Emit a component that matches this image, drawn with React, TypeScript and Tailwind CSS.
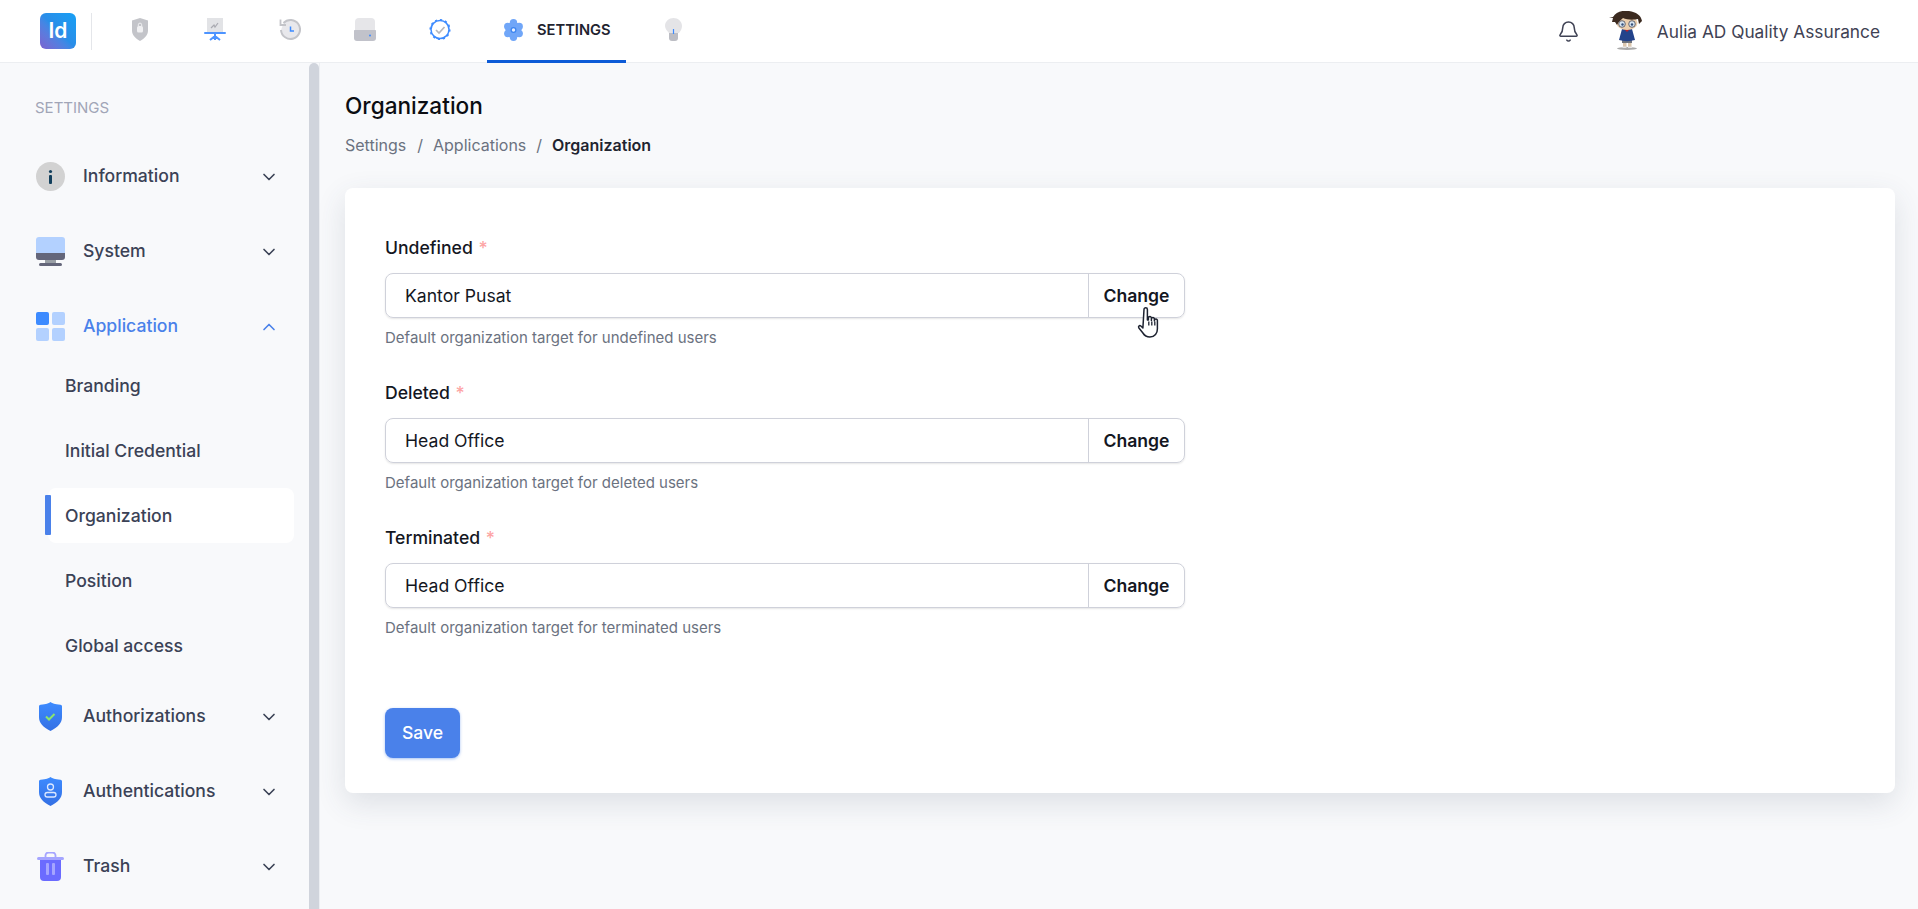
import { ChevronDown, ChevronUp, Bell } from "lucide-react";

const Font = "font-['Inter',sans-serif]";

function ShieldTabIcon() {
  return (
    <svg width="18" height="23" viewBox="0 0 18 23">
      <path d="M9 0l8 2.500v10c0 4.500-3.500 8-8 10.500-4.500-2.500-8-6-8-10.500v-10z" fill="#c3c4c9" />
      <rect x="6" y="8" width="6" height="6.500" rx="1.500" fill="#f0f0f2" />
      <path d="M7.300 8V6.800a1.700 1.700 0 013.400 0V8" fill="none" stroke="#f0f0f2" strokeWidth="1" />
    </svg>
  );
}

function PresentationIcon() {
  return (
    <svg width="22" height="23" viewBox="0 0 22 23">
      <rect x="3" y="0" width="16" height="14" fill="#e2e3e6" />
      <path d="M7 10l3-3 1 2 3-4" fill="none" stroke="#a9aab1" strokeWidth="1.200" />
      <rect x="0" y="14" width="22" height="2" rx="1" fill="#4d94ff" />
      <path d="M11 16v6M11 18l-5 4M11 18l5 4" stroke="#4d94ff" strokeWidth="2" fill="none" />
    </svg>
  );
}

function HistoryIcon() {
  return (
    <svg width="22" height="24" viewBox="0 0 22 24">
      <path d="M4.500 5a9.500 9.500 0 11-2.500 7" fill="#e8e8ec" stroke="#c3c4c9" strokeWidth="2" />
      <path d="M1.500 1.500V7H7" fill="none" stroke="#c3c4c9" strokeWidth="1.800" />
      <path d="M11.500 8.500v4.500h3.500" fill="none" stroke="#3d8bff" strokeWidth="1.500" />
    </svg>
  );
}

function DriveIcon() {
  return (
    <svg width="22" height="23" viewBox="0 0 22 23">
      <path d="M5 0h12a4 4 0 014 4v10H1V4a4 4 0 014-4z" fill="#e6e6e9" />
      <path d="M1 12h20c.6 0 1 .4 1 1v7a3 3 0 01-3 3H3a3 3 0 01-3-3v-7c0-.6.400-1 1-1z" fill="#c1c2ca" />
      <circle cx="16" cy="17.500" r="1" fill="#3d8bff" />
    </svg>
  );
}

function BadgeIcon() {
  return (
    <svg width="22" height="23" viewBox="0 0 22 23">
      <circle cx="11" cy="11.500" r="9" fill="none" stroke="#3d8bff" strokeWidth="1.500" />
      <circle cx="11" cy="11.500" r="9.800" fill="none" stroke="#3d8bff" strokeWidth="1.500" strokeDasharray="2.200 2.900" />
      <path d="M7 12l3 3 5.500-6" fill="none" stroke="#b5b6bc" strokeWidth="1.700" />
    </svg>
  );
}

function GearIcon() {
  const lobes = [0, 60, 120, 180, 240, 300];
  return (
    <svg width="21" height="22" viewBox="0 0 21 22">
      <circle cx="10.500" cy="11" r="8" fill="#70a6f8" />
      {lobes.map((a) => (
        <circle
          key={a}
          cx={10.5 + 6.6 * Math.sin((a * Math.PI) / 180)}
          cy={11 - 7.2 * Math.cos((a * Math.PI) / 180)}
          r="3.700"
          fill="#70a6f8"
        />
      ))}
      <circle cx="10.500" cy="11" r="3" fill="#3d85f0" />
      <circle cx="10.500" cy="11" r="1.700" fill="#e6efff" />
    </svg>
  );
}

function BulbIcon() {
  return (
    <svg width="17" height="23" viewBox="0 0 17 23">
      <path d="M8.500 0C13 0 17 3.500 17 8c0 3-1.500 5-3 7H4C2.500 13 0 11 0 8c0-4.500 4-8 8.500-8z" fill="#e4e4e7" />
      <path d="M4 15h9v5a3 3 0 01-3 3H7a3 3 0 01-3-3z" fill="#bcbdc4" />
      <path d="M8.500 11v5" stroke="#3d8bff" strokeWidth="1.200" />
    </svg>
  );
}

function Avatar() {
  return (
    <svg width="34" height="40" viewBox="0 0 34 40">
      <ellipse cx="18" cy="37.500" rx="10" ry="1.500" fill="#a9a9a9" />
      <rect x="14" y="31" width="3.500" height="5" fill="#dcc7ae" />
      <rect x="19" y="31" width="3.500" height="5" fill="#dcc7ae" />
      <rect x="13.500" y="35.500" width="4" height="1.500" fill="#e4e4e4" />
      <rect x="19" y="35.500" width="4" height="1.500" fill="#e4e4e4" />
      <rect x="13" y="28" width="10" height="4" fill="#70747c" />
      <path d="M13 18h10l3 11c-5 1.500-11 1.500-16 0z" fill="#23438b" />
      <path d="M15 18h6l-3 3z" fill="#b8232b" />
      <ellipse cx="18" cy="12" rx="10.500" ry="7" fill="#eccfae" />
      <path d="M0 7l4-1C7 1 13-1 20 0c7 1 12 4 13 10l-3 3-1-5c-4 1-11 1-15-1-2 2-5 4-6 7l-2-3-3 0 1-4z" fill="#3b2a20" />
      <circle cx="13" cy="13" r="3.300" fill="#d5e3f0" stroke="#4a4a55" strokeWidth="0.800" />
      <circle cx="23" cy="13" r="3.300" fill="#d5e3f0" stroke="#4a4a55" strokeWidth="0.800" />
      <circle cx="13.500" cy="13.500" r="1.200" fill="#35507a" />
      <circle cx="23" cy="13.500" r="1.200" fill="#35507a" />
    </svg>
  );
}

function InfoIcon() {
  return (
    <svg width="29" height="29" viewBox="0 0 29 29">
      <circle cx="14.500" cy="14.500" r="14.500" fill="#d2d2d2" />
      <circle cx="14.500" cy="9.500" r="1.600" fill="#123f5c" />
      <rect x="13" y="13" width="3" height="9" rx="1" fill="#123f5c" />
    </svg>
  );
}

function SystemIcon() {
  return (
    <svg width="29" height="29" viewBox="0 0 29 29">
      <path d="M3 0h23a3 3 0 013 3v13H0V3a3 3 0 013-3z" fill="#b3d1ff" />
      <path d="M0 16h29v4a3 3 0 01-3 3H3a3 3 0 01-3-3z" fill="#64667a" />
      <rect x="9" y="23" width="11" height="3" fill="#9aa0a6" />
      <rect x="3" y="26" width="23" height="3" rx="1.500" fill="#64667a" />
    </svg>
  );
}

function AppIcon() {
  return (
    <div className="grid h-[29px] w-[29px] grid-cols-2 gap-[3px]">
      <div className="rounded-[2px] bg-[#3d8bff]" />
      <div className="rounded-[2px] bg-[#b3d1ff]" />
      <div className="rounded-[2px] bg-[#b3d1ff]" />
      <div className="rounded-[2px] bg-[#b3d1ff]" />
    </div>
  );
}

function ShieldIcon({ user }: { user?: boolean }) {
  const id = user ? "shieldUser" : "shieldCheck";
  return (
    <svg width="25" height="29" viewBox="0 0 25 29">
      <defs>
        <linearGradient id={id} x1="0" y1="0" x2="0" y2="1">
          <stop offset="0" stopColor="#3d8bff" />
          <stop offset="1" stopColor="#3470e4" />
        </linearGradient>
      </defs>
      <path d="M12.500 0c2 1.500 4 2 10 2.800.8.100 1.500.6 1.500 1.500V15c0 6-4 10-11.500 14C5 25 1 21 1 15V4.300c0-.9.700-1.400 1.500-1.500C8.500 2 10.500 1.500 12.500 0z" fill={`url(#${id})`} />
      {user ? (
        <g fill="none" stroke="#dbe8ff" strokeWidth="1.300">
          <circle cx="12.500" cy="10" r="3" />
          <rect x="7" y="15.500" width="11" height="4.500" rx="2.250" />
        </g>
      ) : (
        <path d="M8 14.500l3 3 5.500-5.500" fill="none" stroke="#8ae66e" strokeWidth="2" />
      )}
    </svg>
  );
}

function TrashIcon() {
  return (
    <svg width="27" height="29" viewBox="0 0 27 29">
      <path d="M8.500 5V3.500A3 3 0 0111.500.5h4a3 3 0 013 3V5" fill="none" stroke="#a5a5ff" strokeWidth="1.800" />
      <rect x="0" y="5" width="27" height="3" rx="1.500" fill="#a5a5ff" />
      <path d="M3 8h21v17a4 4 0 01-4 4H7a4 4 0 01-4-4z" fill="#6b6bff" />
      <rect x="9" y="11" width="3" height="12" rx="1" fill="#a5a5ff" />
      <rect x="15" y="11" width="3" height="12" rx="1" fill="#a5a5ff" />
    </svg>
  );
}

function HandCursor() {
  return (
    <svg width="24" height="32" viewBox="0 0 24 32">
      <path
        d="M7 2.500a1.700 1.700 0 013.400 0V13l1 0V11a1.500 1.500 0 013 0v2.500V12a1.500 1.500 0 013 0v2V13.500a1.500 1.500 0 013 0V22c0 4-2.500 8-7.500 8-4 0-5.500-1.500-7-4l-4-5c-1-1.500.5-3 2-2l2 2z"
        fill="#fff"
        stroke="#1d2230"
        strokeWidth="1.500"
        strokeLinejoin="round"
      />
      <path d="M11.800 14.500v4M14.800 14.500v4M17.800 14.500v4" stroke="#1d2230" strokeWidth="1.300" />
    </svg>
  );
}

const topTabs = [
  <ShieldTabIcon key="shield" />,
  <PresentationIcon key="presentation" />,
  <HistoryIcon key="history" />,
  <DriveIcon key="drive" />,
  <BadgeIcon key="badge" />,
];

function TopBar() {
  return (
    <header className="flex h-[63px] items-stretch border-b border-[#eceef1] bg-white">
      <div className="ml-[40px] mt-[13px] flex h-[36px] w-[36px] items-center justify-center rounded-[6px] bg-gradient-to-tr from-[#7a62cf] via-[#2a8de8] to-[#14a0f5] text-[21px] font-semibold text-white">
        Id
      </div>
      <div className="ml-[15px] mt-[13px] h-[37px] w-px bg-[#e4e6ea]" />
      <nav className="ml-[10px] flex">
        {topTabs.map((icon, i) => (
          <div key={i} className="flex w-[75px] items-center justify-center pb-[3px]">
            {icon}
          </div>
        ))}
        <div className="mx-[10px] flex h-[63px] w-[139px] items-center gap-[13px] border-b-[3px] border-[#0d5bd7] pl-[16px]">
          <GearIcon />
          <span className="text-[14.7px] font-semibold text-[#1f2430]">SETTINGS</span>
        </div>
        <div className="flex w-[75px] items-center justify-center pb-[3px]">
          <BulbIcon />
        </div>
      </nav>
      <div className="ml-auto flex items-center pr-[38px]">
        <Bell className="mr-[29px] h-[23px] w-[23px] text-[#3f4254]" strokeWidth={1.6} />
        <Avatar />
        <span className="ml-[14px] pt-[1px] text-[17.3px] text-[#3f4254]">Aulia AD Quality Assurance</span>
      </div>
    </header>
  );
}

function SideRow({ icon, label, open, active }: { icon: React.ReactNode; label: string; open?: boolean; active?: boolean }) {
  const Chevron = open ? ChevronUp : ChevronDown;
  return (
    <div className={`flex h-[75px] items-center pl-[36px] pr-[30px] ${active ? "text-[#4a81ea]" : "text-[#3b4256]"}`}>
      <span className="flex w-[29px] justify-center">{icon}</span>
      <span className="ml-[18px] flex-1 text-[17.6px] font-medium">{label}</span>
      <Chevron className="h-[20px] w-[20px]" strokeWidth={2} />
    </div>
  );
}

const subItems = ["Branding", "Initial Credential", "Organization", "Position", "Global access"];

function Sidebar() {
  return (
    <aside className="flex w-[320px] shrink-0 overflow-hidden">
      <div className="w-[309px] shrink-0">
        <div className="pl-[35px] pt-[35px] text-[15px] leading-[20px] text-[#a1a5b7]">SETTINGS</div>
        <div className="mt-[21px]">
          <SideRow icon={<InfoIcon />} label="Information" />
          <SideRow icon={<SystemIcon />} label="System" />
          <SideRow icon={<AppIcon />} label="Application" open active />
        </div>
        <div className="mt-[-5px] flex flex-col gap-[10px] pl-[48px]">
          {subItems.map((item) => {
            const current = item === "Organization";
            return (
              <div
                key={item}
                className={`relative flex h-[55px] w-[246px] items-center rounded-[8px] pl-[17px] text-[17.6px] font-medium text-[#3b4256] ${current ? "mb-[1px] mt-[-1px] bg-white pt-[2px]" : ""}`}
              >
                {current && <div className="absolute left-[-3px] top-[7px] h-[40px] w-[6px] rounded-[1px] bg-[#4a81ea]" />}
                {item}
              </div>
            );
          })}
        </div>
        <div className="mt-[5px]">
          <SideRow icon={<ShieldIcon />} label="Authorizations" />
          <SideRow icon={<ShieldIcon user />} label="Authentications" />
          <SideRow icon={<TrashIcon />} label="Trash" />
        </div>
      </div>
      <div className="h-full w-[10px] rounded-t-[5px] bg-[#d0d4dc]" />
      <div className="h-full w-px bg-[#eceef2]" />
    </aside>
  );
}

const fields = [
  { label: "Undefined", value: "Kantor Pusat", help: "Default organization target for undefined users", hover: true },
  { label: "Deleted", value: "Head Office", help: "Default organization target for deleted users" },
  { label: "Terminated", value: "Head Office", help: "Default organization target for terminated users" },
];

function Field({ label, value, help, hover }: { label: string; value: string; help: string; hover?: boolean }) {
  return (
    <div className="h-[145px]">
      <div className="text-[17.6px] font-medium leading-[24px] text-[#14171f]">
        {label} <span className="ml-[1px] text-[#fda4a4]">*</span>
      </div>
      <div className="mt-[13px] flex h-[45px] w-[800px] rounded-[8px] border border-[#cfd1da] shadow-[0_1px_2px_rgba(0,0,0,0.1)]">
        <div className="flex flex-1 items-center pl-[19px] pt-[1px] text-[17.6px] text-[#14171f]">{value}</div>
        <div className="relative flex w-[96px] items-center justify-center border-l border-[#cfd1da] pt-[1px] text-[17.6px] font-semibold text-[#14171f]">
          Change
          {hover && (
            <div className="absolute left-[48px] top-[33px]">
              <HandCursor />
            </div>
          )}
        </div>
      </div>
      <div className="mt-[10px] text-[15px] leading-[20px] text-[#6b7280]">{help}</div>
    </div>
  );
}

export default function App() {
  return (
    <div className={`flex h-screen flex-col overflow-hidden bg-[#f8f9fb] ${Font}`}>
      <TopBar />
      <div className="flex min-h-0 flex-1">
        <Sidebar />
        <main className="flex-1 pl-[25px] pr-[23px]">
          <h1 className="pt-[27px] text-[22.6px] font-medium leading-[32px] text-[#0b0d12]">Organization</h1>
          <div className="mt-[11px] flex items-center text-[16px] leading-[24px] text-[#6b7280]">
            <span>Settings</span>
            <span className="ml-[11px] mr-[10px]">/</span>
            <span>Applications</span>
            <span className="mx-[10px]">/</span>
            <span className="font-semibold text-[#1f2430]">Organization</span>
          </div>
          <section className="mt-[31px] h-[605px] rounded-[8px] bg-white pl-[40px] pt-[48px] shadow-[0_10px_30px_rgba(60,70,90,0.14)]">
            {fields.map((f) => (
              <Field key={f.label} {...f} />
            ))}
            <button className="mt-[37px] h-[50px] w-[75px] rounded-[8px] bg-[#4a81ea] text-[17.6px] font-medium text-white shadow-[0_1px_3px_rgba(74,129,234,0.5)]">
              Save
            </button>
          </section>
        </main>
      </div>
    </div>
  );
}
